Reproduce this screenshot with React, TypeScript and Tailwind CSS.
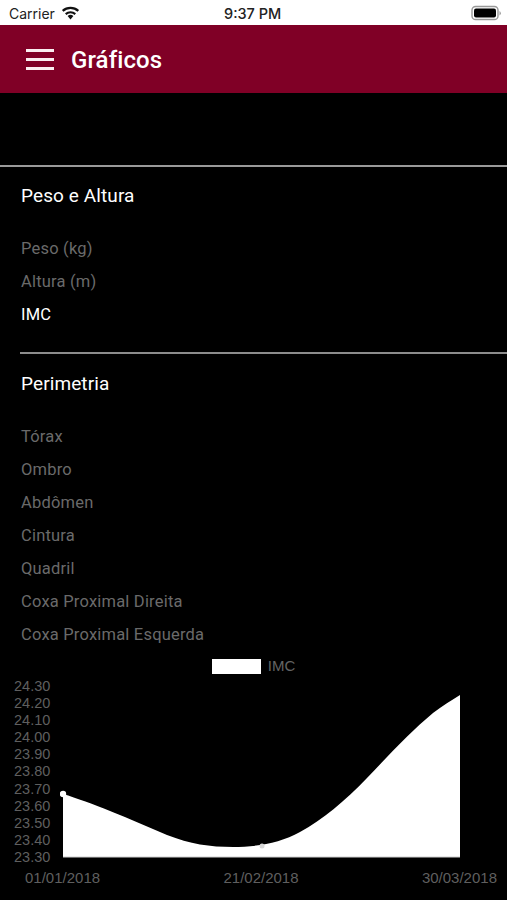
const yLabels = ["24.30","24.20","24.10","24.00","23.90","23.80","23.70","23.60","23.50","23.40","23.30"];
const peso = [
  { t: "Peso (kg)", on: false },
  { t: "Altura (m)", on: false },
  { t: "IMC", on: true },
];
const perim = ["Tórax","Ombro","Abdômen","Cintura","Quadril","Coxa Proximal Direita","Coxa Proximal Esquerda"];

function Item({ t, on }: { t: string; on?: boolean }) {
  return (
    <div className={`h-[33px] flex items-center text-[16.5px] tracking-[0.2px] ${on ? "text-white" : "text-[#6a6a6a]"}`}>{t}</div>
  );
}

export default function App() {
  return (
    <div className="w-[507px] h-[900px] bg-black overflow-hidden flex flex-col font-['Roboto',sans-serif]">
      <div className="h-[25px] bg-white flex items-center justify-between pl-[9px] pr-[5px] pt-[2px] text-[#222] font-['Inter',sans-serif] text-[14px] relative">
        <div className="flex items-center gap-[6px]">
          <span>Carrier</span>
          <svg width="19" height="14" viewBox="0 0 19 14" className="-mt-[2px]">
            <path d="M9.5 13.5 L6.6 10.1 A4.4 4.4 0 0 1 12.4 10.1 Z" fill="#111" />
            <path d="M4.7 8.1 A7.2 7.2 0 0 1 14.3 8.1" fill="none" stroke="#111" strokeWidth="2.1" />
            <path d="M1.7 4.9 A11.6 11.6 0 0 1 17.3 4.9" fill="none" stroke="#111" strokeWidth="2.2" />
          </svg>
        </div>
        <span className="absolute left-[224px] font-medium text-[14.5px]">9:37 PM</span>
        <svg width="31" height="16" viewBox="0 0 31 16" className="-mt-[2px]">
          <rect x="1" y="1.5" width="26" height="13" rx="3.6" fill="none" stroke="#999" strokeWidth="1.4" />
          <rect x="3" y="3.5" width="22" height="9" rx="2" fill="#000" />
          <path d="M28.5 6 a2.5 2.5 0 0 1 0 4.4 Z" fill="#999" />
        </svg>
      </div>
      <div className="h-[68px] bg-[#800026] flex items-center pl-[26px] gap-[17px] text-white">
        <div className="w-[28px] flex flex-col gap-[6px]">
          <div className="h-[3px] bg-[#fbeef1]" />
          <div className="h-[3px] bg-[#fbeef1]" />
          <div className="h-[3px] bg-[#fbeef1]" />
        </div>
        <span className="text-[24px] font-medium tracking-[0.1px] pt-[2px]">Gráficos</span>
      </div>
      <div className="h-[72px]" />
      <div className="h-[2px] bg-[#9a9a9a]" />
      <div className="pl-[21px]">
        <div className="h-[57px] flex items-center text-[19px] text-white tracking-[0.1px] pt-[2px]">Peso e Altura</div>
        <div className="pt-[9px] pb-[20px]">
          {peso.map((p) => <Item key={p.t} t={p.t} on={p.on} />)}
        </div>
        <div className="h-[2px] bg-[#8c8c8c] -ml-px" />
        <div className="h-[59px] flex items-center text-[19px] text-white tracking-[0.1px] pt-[1px]">Perimetria</div>
        <div className="pt-[8px]">
          {perim.map((p) => <Item key={p} t={p} />)}
        </div>
      </div>
      <div className="mt-[6px] font-['Liberation_Sans',sans-serif] text-[#5f5f5f] text-[14.5px]">
        <div className="flex justify-center items-center gap-[7px] h-[16px]">
          <div className="w-[49px] h-[15px] bg-white" />
          <span className="text-[15px] text-[#646464]">IMC</span>
        </div>
        <div className="flex mt-[4px]">
          <div className="w-[63px] pl-[14px] shrink-0 flex flex-col">
            {yLabels.map((l) => <div key={l} className="h-[17.1px] leading-[17.1px]">{l}</div>)}
          </div>
          <svg width="404" height="188" viewBox="0 0 404 188" className="shrink-0 -ml-[3px]">
            <path
              d="M3 116 C30 124 70 141 107 157 C130 166 150 169 173 169 C197 169 220 165 240 154 C262 142 285 123 307 100 C330 76 350 54 373 35 C382 28 392 22 400 17 L400 179 L3 179 Z"
              fill="#fff"
            />
            <circle cx="3" cy="116" r="3.2" fill="#fff" />
            <circle cx="202" cy="168" r="2.5" fill="#d8d8d8" />
            <line x1="3" y1="179" x2="400" y2="179" stroke="#cfcfcf" strokeWidth="1" />
          </svg>
        </div>
        <div className="flex justify-between pl-[25px] pr-[10px] mt-[1px] text-[15px]">
          <span>01/01/2018</span>
          <span>21/02/2018</span>
          <span>30/03/2018</span>
        </div>
      </div>
    </div>
  );
}
